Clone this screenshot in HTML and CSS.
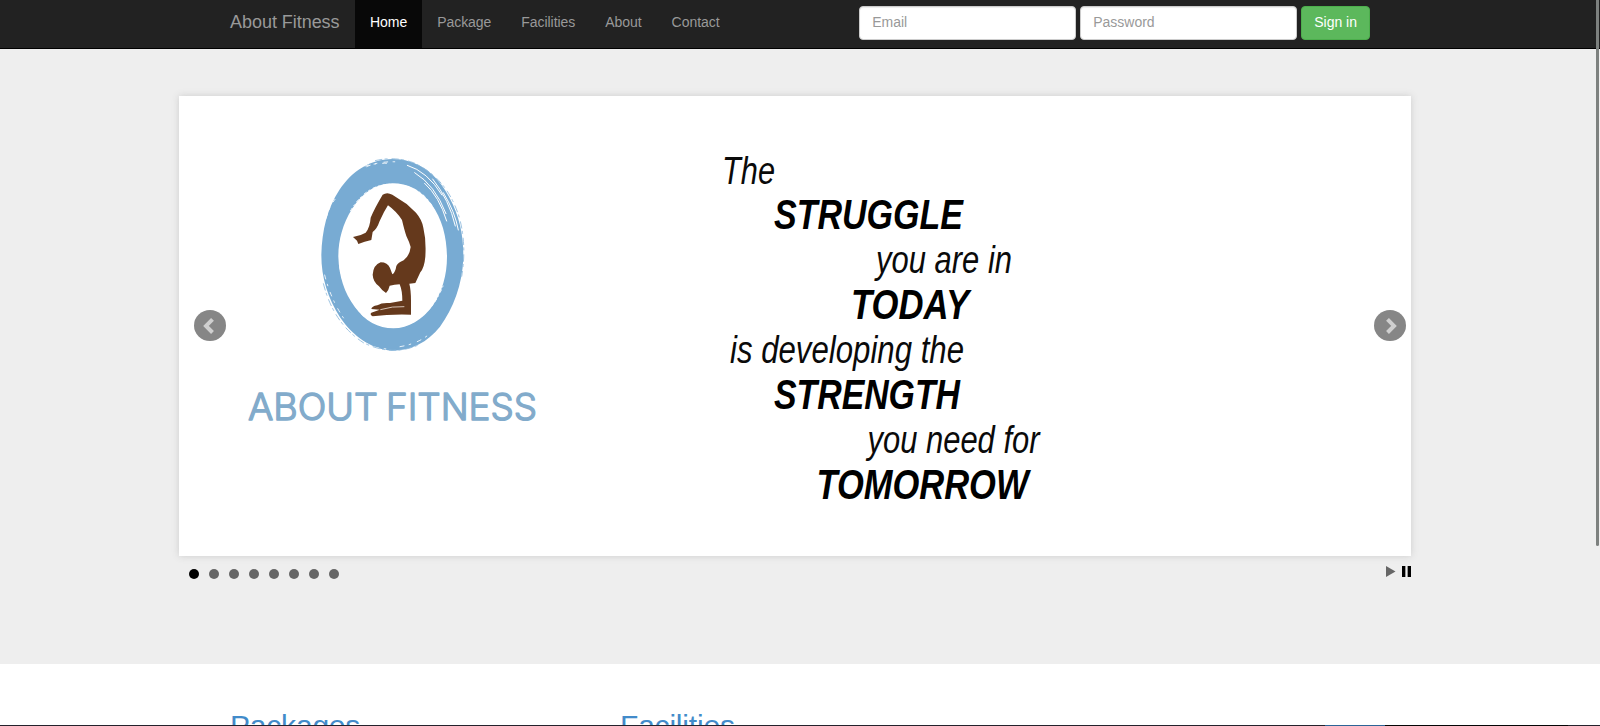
FILE: index.html
```html
<!DOCTYPE html>
<html lang="en">
<head>
<meta charset="utf-8">
<title>About Fitness</title>
<link rel="stylesheet" href="styles.css">
</head>
<body>
<nav class="navbar">
  <div class="container navbar-inner">
    <a class="brand">About Fitness</a>
    <ul class="nav">
      <li class="active"><a>Home</a></li>
      <li><a>Package</a></li>
      <li><a>Facilities</a></li>
      <li><a>About</a></li>
      <li><a>Contact</a></li>
    </ul>
    <form class="login">
      <input class="field" type="text" placeholder="Email">
      <input class="field" type="password" placeholder="Password">
      <button class="btn" type="button">Sign in</button>
    </form>
  </div>
</nav>
<main class="hero">
  <div class="slider">
    <svg class="slide" viewBox="179 96 1232 460">
      <g transform="translate(300 140) scale(.33333)">
        <path fill="#78abd3" fill-rule="evenodd" d="M277 57C348 57 408 96 447 170C480 230 491 290 490 355C487 435 460 505 420 560C382 607 335 632 275 632C215 628 160 590 120 532C84 474 64 414 64 345C66 270 82 205 118 150C157 92 210 58 277 57ZM277 130C230 130 188 157 156 207C128 252 115 300 115 350C117 410 133 457 164 500C195 543 235 565 280 565C326 564 367 539 398 497C427 455 441 405 441 350C440 290 427 238 394 192C362 150 324 130 277 130Z"/>
        <g fill="none" stroke="#fff" stroke-linecap="round">
          <path stroke-width="3" d="M322 76Q382 94 426 165M344 98Q405 135 438 221M374 130Q418 170 440 243M398 117Q448 180 466 258M430 158Q465 215 475 270"/>
          <path stroke-width="2.5" stroke-dasharray="12 16 5 21" d="M195 78Q230 68 275 70M78 235Q88 200 105 178M74 405Q93 480 132 536M300 620Q360 610 395 576M176 599Q215 625 263 627M200 80Q240 62 300 66"/>
          <path stroke-width="3" stroke-dasharray="8 9 3 12" d="M152 212Q200 130 277 133Q370 135 405 215M119 380Q135 470 190 528Q250 575 325 553Q395 523 429 438"/>
        </g>
        <path fill="none" stroke="#8db9dc" stroke-width="2.5" stroke-dasharray="22 7 9 12" d="M225 62Q285 48 340 68Q445 115 480 240Q500 320 485 410M70 430Q100 550 190 608Q275 650 355 615"/>
        <path fill="#65391c" d="M248 164Q261 155 277 164L320 192L348 218Q366 239 370 263Q379 300 376 350Q373 383 361 397L346 429L328 431Q333 450 333 483L333 524Q270 522 218 529Q208 524 214 518L239 509L214 507Q215 499 232 496Q245 487 270 489L307 482Q307 452 299 433Q283 434 269 437Q266 451 258 459Q246 452 237 439Q219 425 218 404Q220 375 242 367Q263 367 270 384L277 403Q286 398 289 378Q294 368 311 361Q329 347 332 321Q329 308 319 288Q313 270 306 240Q289 214 264 196Q251 216 239 243Q231 267 218 276L214 300L194 305L175 312L171 302L159 291Q180 288 197 278Q210 262 212 233Q224 204 248 164Z"/>
        <path fill="none" stroke="#d7c4b7" stroke-width="3" d="M241 509Q277 498 313 500"/>
      </g>
      <g class="wordmark">
        <text x="248" y="420" textLength="130" lengthAdjust="spacingAndGlyphs">ABOUT</text>
        <text x="386" y="420" textLength="151" lengthAdjust="spacingAndGlyphs">FITNESS</text>
      </g>
      <g class="quote">
        <text x="722" y="183.5" textLength="53" lengthAdjust="spacingAndGlyphs">The</text>
        <text class="strong" x="774" y="229.3" textLength="189" lengthAdjust="spacingAndGlyphs">STRUGGLE</text>
        <text x="876" y="273.2" textLength="136" lengthAdjust="spacingAndGlyphs">you are in</text>
        <text class="strong" x="851" y="319.3" textLength="118" lengthAdjust="spacingAndGlyphs">TODAY</text>
        <text x="730" y="363.2" textLength="234" lengthAdjust="spacingAndGlyphs">is developing the</text>
        <text class="strong" x="774" y="409.3" textLength="186" lengthAdjust="spacingAndGlyphs">STRENGTH</text>
        <text x="867.5" y="453.2" textLength="172" lengthAdjust="spacingAndGlyphs">you need for</text>
        <text class="strong" x="816.5" y="499.3" textLength="212" lengthAdjust="spacingAndGlyphs">TOMORROW</text>
      </g>
    </svg>
    <svg class="arrow arrow-prev" viewBox="0 0 32 31"><ellipse cx="16" cy="15.5" rx="16" ry="15.5"/><path d="M18.5 9.3L12 15.9L18.5 22.5"/></svg>
    <svg class="arrow arrow-next" viewBox="0 0 32 31"><ellipse cx="16" cy="15.5" rx="16" ry="15.5"/><path d="M13.5 9.3L20 15.9L13.5 22.5"/></svg>
  </div>
  <div class="controls">
    <div class="pager">
      <i class="dot current"></i><i class="dot"></i><i class="dot"></i><i class="dot"></i><i class="dot"></i><i class="dot"></i><i class="dot"></i><i class="dot"></i>
    </div>
    <svg class="playback" viewBox="0 0 25 11"><path fill="#666" d="M0 0L9.5 5.5L0 11Z"/><path fill="#999" d="M19 0h3v11h-3z"/><path d="M16 0h3v11h-3zM22 0h3v11h-3z"/><path fill="#eee" d="M20 0h1v11h-1z"/></svg>
  </div>
</main>
<section class="container columns">
  <h2>Packages</h2>
  <h2>Facilities</h2>
</section>
<div class="scrollbar"></div>
<div class="taskbar"><span class="task-active"></span><span class="task-dark"></span></div>
</body>
</html>
```
FILE: styles.css
```css
* { box-sizing: border-box; }
html, body { height: 726px; overflow: hidden; }
body {
  margin: 0;
  background: #fff;
  font: 14px/20px "Liberation Sans", Arial, sans-serif;
}
.container { width: 1170px; margin: 0 auto; padding: 0 15px; }
.navbar { height: 49px; background: #222; border-bottom: 1px solid #000; }
.navbar-inner { display: flex; align-items: flex-start; height: 48px; }
.brand { width: 125px; padding-top: 12px; font-size: 18px; letter-spacing: -.04px; color: #999; white-space: nowrap; }
.nav { display: flex; margin: 0; padding: 0; list-style: none; letter-spacing: -.05px; }
.nav li { height: 48px; padding: 12px 15px 0; color: #999; }
.nav .active { background: #080808; color: #fff; }
.login { display: flex; gap: 4px; margin: 6px 0 0 auto; }
.field {
  width: 217px;
  height: 34px;
  padding: 5px 12px 7px;
  border: 1px solid #ccc;
  border-radius: 4px;
  background: #fff;
  box-shadow: inset 0 1px 1px rgba(0, 0, 0, .075);
  font: inherit;
}
.field::placeholder { color: #999; opacity: 1; }
.btn {
  height: 34px;
  padding: 5px 12px 7px;
  border: 1px solid #4cae4c;
  border-radius: 4px;
  background: #5cb85c;
  color: #fff;
  font: inherit;
}
.hero { height: 615px; padding: 47px 189px 0 179px; background: #eee; }
.slider { position: relative; height: 460px; background: #fff; box-shadow: 0 0 7px #ccc; }
.slide { display: block; width: 1232px; height: 460px; }
.wordmark {
  font: 300 37px Inter, sans-serif;
  fill: #82abcb;
  stroke: #82abcb;
  stroke-width: 1.4;
  stroke-linejoin: round;
}
.quote { font: italic 38px "Liberation Sans", Arial, sans-serif; fill: #0a0a0a; }
.strong { font-size: 42px; font-weight: bold; fill: #000; }
.arrow { position: absolute; top: 214px; width: 32px; height: 31px; }
.arrow ellipse { fill: #868686; }
.arrow path { fill: none; stroke: #cfcfcf; stroke-width: 4; }
.arrow-prev { left: 15px; }
.arrow-next { right: 5px; }
.controls { display: flex; justify-content: space-between; padding: 10px 0 0 10px; }
.pager { display: flex; gap: 10px; padding-top: 3px; }
.dot { width: 10px; height: 10px; border-radius: 5px; background: #666; }
.current { background: #000; }
.playback { width: 25px; height: 11px; }
.columns { display: flex; padding-top: 45px; }
.columns h2 { width: 390px; margin: 0; font-size: 30px; font-weight: 500; line-height: 33px; letter-spacing: -.2px; color: #428bca; }
.scrollbar { position: absolute; top: 0; right: 1px; width: 3px; height: 546px; border-radius: 0 0 2px 2px; background: #7d817f; }
.taskbar { position: absolute; left: 0; top: 725px; display: flex; width: 1600px; height: 1px; padding-left: 1325px; background: #24222c; }
.task-active { width: 60px; background: #2d6496; }
.task-dark { width: 183px; background: #050505; }
```
